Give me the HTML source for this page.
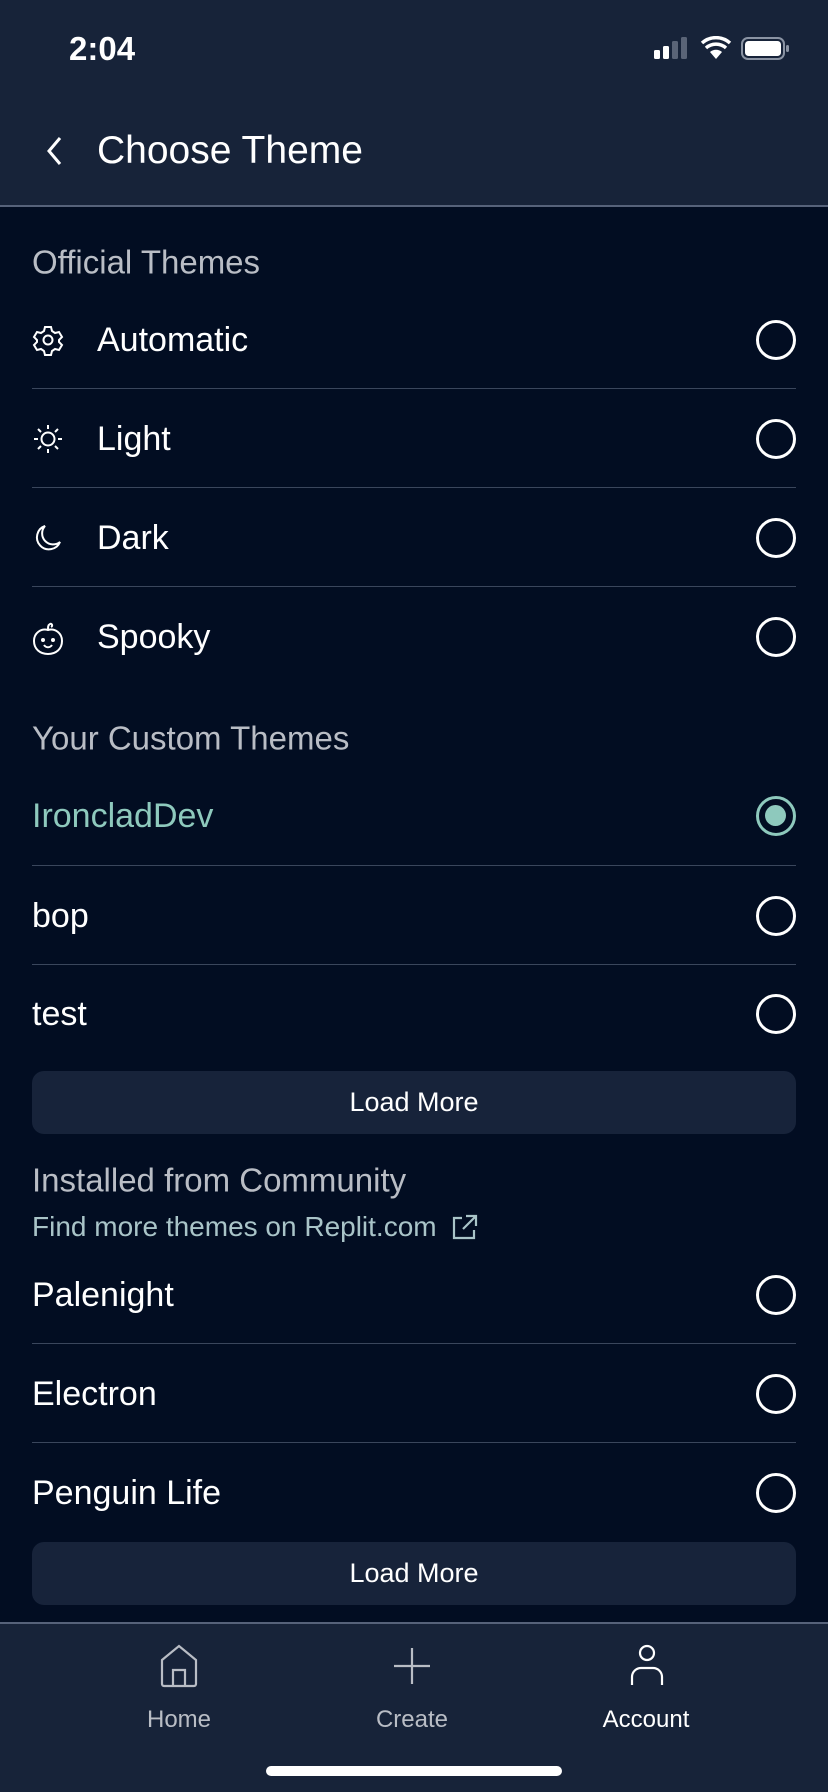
<!DOCTYPE html>
<html><head><meta charset="utf-8">
<style>
*{margin:0;padding:0;box-sizing:border-box}
body{width:828px;height:1792px;background:#020d22;font-family:"Liberation Sans",sans-serif;color:#fff;position:relative;overflow:hidden}
.hdr{position:absolute;left:0;top:0;width:828px;height:207px;background:#172339;border-bottom:2px solid #56627a}
.abs{position:absolute}
.sec{position:absolute;left:32px;font-size:33px;color:#b9bdc5;line-height:1;transform:translateY(-50%)}
.row{position:absolute;left:32px;width:764px;height:99px}
.row .t{position:absolute;top:50%;transform:translateY(-50%);font-size:34px;line-height:1;color:#fff}
.row .r{position:absolute;right:0;top:50%;width:40px;height:40px;margin-top:-20px;border:3.5px solid #fff;border-radius:50%}
.row .ic{position:absolute;left:0;top:50%;margin-top:-16px}
.sep{position:absolute;left:32px;width:764px;height:1px;background:#3a465c}
.btn{position:absolute;left:32px;width:764px;height:63px;background:#17233a;border-radius:12px;text-align:center;line-height:63px;font-size:27px;color:#fff}
.tab{position:absolute;left:0;top:1622px;width:828px;height:170px;background:#172339;border-top:2px solid #56627a}
.tl{position:absolute;font-size:24px;line-height:1;transform:translateX(-50%);top:84px}
</style></head><body>
<div class="hdr">
 <div class="abs" style="left:69px;top:32px;font-size:33px;font-weight:bold;line-height:1">2:04</div>
 <svg class="abs" style="left:652px;top:36px" width="140" height="26" viewBox="0 0 140 26">
  <rect x="2" y="14" width="6" height="9" rx="1.5" fill="#fff"/>
  <rect x="11" y="10" width="6" height="13" rx="1.5" fill="#fff"/>
  <rect x="20" y="5" width="6" height="18" rx="1.5" fill="#5a6477"/>
  <rect x="29" y="1" width="6" height="22" rx="1.5" fill="#5a6477"/>
  <path d="M64 23 L58 16 A9 9 0 0 1 70 16 Z" fill="#fff"/>
  <path d="M54 12 A15 15 0 0 1 74 12" stroke="#fff" stroke-width="3.5" fill="none"/>
  <path d="M50 7 A21 21 0 0 1 78 7" stroke="#fff" stroke-width="3.5" fill="none"/>
  <rect x="90" y="2" width="42" height="21" rx="6" fill="none" stroke="#8a93a3" stroke-width="2"/>
  <rect x="93" y="5" width="36" height="15" rx="3.5" fill="#fff"/>
  <rect x="134" y="9" width="3" height="7" rx="1.5" fill="#8a93a3"/>
 </svg>
 <svg class="abs" style="left:45px;top:136px" width="20" height="30" viewBox="0 0 20 30"><path d="M15 2 L4 15 L15 28" stroke="#fff" stroke-width="3" fill="none"/></svg>
 <div class="abs" style="left:97px;top:131px;font-size:39px;line-height:1">Choose Theme</div>
</div>

<div class="sec" style="top:262px">Official Themes</div>

<div class="row" style="top:290px">
 <svg class="ic" width="32" height="32" viewBox="0 0 32 32" fill="none" stroke="#fff" stroke-width="2"><path d="M13 3h6l1 4 3 2 4-1 3 5-3 3v2l3 3-3 5-4-1-3 2-1 4h-6l-1-4-3-2-4 1-3-5 3-3v-2l-3-3 3-5 4 1 3-2z"/><circle cx="16" cy="16" r="4.5"/></svg>
 <div class="t" style="left:65px">Automatic</div><div class="r"></div></div>
<div class="sep" style="top:388px"></div>
<div class="row" style="top:389px">
 <svg class="ic" width="32" height="32" viewBox="0 0 32 32" fill="none" stroke="#fff" stroke-width="2"><circle cx="16" cy="16" r="6.5"/><path d="M16 2v4M16 26v4M2 16h4M26 16h4M6 6l3 3M23 23l3 3M26 6l-3 3M9 23l-3 3"/></svg>
 <div class="t" style="left:65px">Light</div><div class="r"></div></div>
<div class="sep" style="top:487px"></div>
<div class="row" style="top:488px">
 <svg class="ic" width="32" height="32" viewBox="0 0 32 32" fill="none" stroke="#fff" stroke-width="2"><path d="M13 4A12 12 0 1 0 28 20 A11 11 0 0 1 13 4z"/></svg>
 <div class="t" style="left:65px">Dark</div><div class="r"></div></div>
<div class="sep" style="top:586px"></div>
<div class="row" style="top:587px">
 <svg class="ic" width="32" height="34" viewBox="0 0 32 34" fill="none" stroke="#fff" stroke-width="2"><path d="M16 9C9 7 2 12 2 20s6 13 14 13 14-5 14-13-7-13-14-11z"/><path d="M16 9c0-3 0-5 2-6s3 2 1 3"/><circle cx="11" cy="19" r="1" fill="#fff"/><circle cx="21" cy="19" r="1" fill="#fff"/><path d="M12 24c2 3 6 3 8 0"/></svg>
 <div class="t" style="left:65px">Spooky</div><div class="r"></div></div>

<div class="sec" style="top:738px">Your Custom Themes</div>

<div class="row" style="top:766px"><div class="t" style="left:0;color:#8ec9bd">IroncladDev</div><div class="r" style="border-color:#8ec9bd"><div style="position:absolute;left:6px;top:6px;width:21px;height:21px;border-radius:50%;background:#8ec9bd"></div></div></div>
<div class="sep" style="top:865px"></div>
<div class="row" style="top:866px"><div class="t" style="left:0">bop</div><div class="r"></div></div>
<div class="sep" style="top:964px"></div>
<div class="row" style="top:964px"><div class="t" style="left:0">test</div><div class="r"></div></div>

<div class="btn" style="top:1071px">Load More</div>

<div class="sec" style="top:1180px">Installed from Community</div>
<div class="abs" style="left:32px;top:1213px;font-size:28px;line-height:1;color:#a9c4c8">Find more themes on Replit.com</div>
<svg class="abs" style="left:451px;top:1214px" width="27" height="27" viewBox="0 0 27 27" fill="none" stroke="#a9c4c8" stroke-width="2.2"><path d="M11 4H3v20h20v-8M15 2h10v10M25 2L12 15"/></svg>

<div class="row" style="top:1245px"><div class="t" style="left:0">Palenight</div><div class="r"></div></div>
<div class="sep" style="top:1343px"></div>
<div class="row" style="top:1344px"><div class="t" style="left:0">Electron</div><div class="r"></div></div>
<div class="sep" style="top:1442px"></div>
<div class="row" style="top:1443px"><div class="t" style="left:0">Penguin Life</div><div class="r"></div></div>

<div class="btn" style="top:1542px">Load More</div>

<div class="tab">
 <svg class="abs" style="left:160px;top:20px" width="38" height="44" viewBox="0 0 38 44" fill="none" stroke="#b9bdc5" stroke-width="2.2"><path d="M2 16L19 2l17 14v24a2 2 0 0 1-2 2H4a2 2 0 0 1-2-2z"/><path d="M13 42V26h12v16"/></svg>
 <div class="tl" style="left:179px;color:#b9bdc5">Home</div>
 <svg class="abs" style="left:394px;top:24px" width="36" height="36" viewBox="0 0 36 36" stroke="#b9bdc5" stroke-width="2.2"><path d="M18 0v36M0 18h36"/></svg>
 <div class="tl" style="left:412px;color:#b9bdc5">Create</div>
 <svg class="abs" style="left:629px;top:20px" width="36" height="42" viewBox="0 0 36 42" fill="none" stroke="#fff" stroke-width="2.2"><circle cx="18" cy="9" r="7"/><path d="M3 41V33a9 9 0 0 1 9-9h12a9 9 0 0 1 9 9v8"/></svg>
 <div class="tl" style="left:646px;color:#fff">Account</div>
 <div class="abs" style="left:266px;top:142px;width:296px;height:10px;border-radius:5px;background:#fff"></div>
</div>
</body></html>
